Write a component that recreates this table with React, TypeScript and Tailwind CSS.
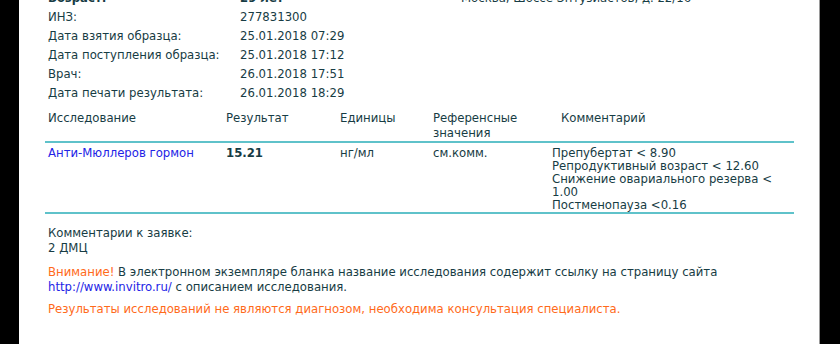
export default function App() {
  const info: [string, string][] = [
    ['ИНЗ:', '277831300'],
    ['Дата взятия образца:', '25.01.2018 07:29'],
    ['Дата поступления образца:', '25.01.2018 17:12'],
    ['Врач:', '26.01.2018 17:51'],
    ['Дата печати результата:', '26.01.2018 18:29'],
  ];

  const comments = [
    'Препубертат < 8.90',
    'Репродуктивный возраст < 12.60',
    'Снижение овариального резерва <',
    '1.00',
    'Постменопауза <0.16',
  ];

  return (
    <div className="flex h-[344px] w-[840px] overflow-hidden bg-black">
      <div
        className="ml-[19px] h-full w-[801px] overflow-hidden border-r border-[#9a9a9a] bg-white text-[13px] text-[#173c44]"
        style={{ fontFamily: '"DejaVu Sans Condensed", "DejaVu Sans", Verdana, sans-serif' }}
      >
        {/* шапка бланка */}
        <div className="mt-[-12px] pl-[29px] leading-[19px]">
          <div className="grid grid-cols-[192px_221px_1fr] font-bold">
            <div>Возраст:</div>
            <div>29 лет</div>
            <div className="font-normal">Москва, Шоссе Энтузиастов, д. 22/16</div>
          </div>
          {info.map(([label, value]) => (
            <div key={label} className="grid grid-cols-[192px_1fr]">
              <div>{label}</div>
              <div>{value}</div>
            </div>
          ))}
        </div>

        {/* таблица результатов */}
        <div className="ml-[26px] mt-[8px] w-[749px]">
          <div className="grid grid-cols-[178px_114px_93px_119px_1fr] border-b-2 border-[#5fc2ca] pb-[1px] leading-[15px]">
            <div className="pl-[3px]">Исследование</div>
            <div className="pl-[3px]">Результат</div>
            <div className="pl-[3px]">Единицы</div>
            <div className="pl-[3px]">
              Референсные
              <br />
              значения
            </div>
            <div className="pl-[12px]">Комментарий</div>
          </div>
          <div className="grid grid-cols-[178px_114px_93px_119px_1fr] border-b-2 border-[#5fc2ca] pb-[1px] pt-[3px] leading-[13px]">
            <div className="pl-[3px] text-[#2323e6]">Анти-Мюллеров гормон</div>
            <div className="pl-[3px] font-bold">15.21</div>
            <div className="pl-[3px]">нг/мл</div>
            <div className="pl-[3px]">см.комм.</div>
            <div className="whitespace-nowrap pl-[3px]">
              {comments.map((c) => (
                <div key={c}>{c}</div>
              ))}
            </div>
          </div>
        </div>

        {/* комментарии */}
        <div className="pl-[29px] pt-[11px] leading-[15px]">
          <div>Комментарии к заявке:</div>
          <div>2 ДМЦ</div>
          <div className="mt-[9px]">
            <span className="text-[#ff6a1a]">Внимание!</span> В электронном экземпляре бланка название исследования содержит ссылку на страницу сайта
            <br />
            <span className="text-[#2323e6]">http://www.invitro.ru/</span> с описанием исследования.
          </div>
          <div className="mt-[7px] text-[#ff6a1a]">
            Результаты исследований не являются диагнозом, необходима консультация специалиста.
          </div>
        </div>
      </div>
    </div>
  );
}
